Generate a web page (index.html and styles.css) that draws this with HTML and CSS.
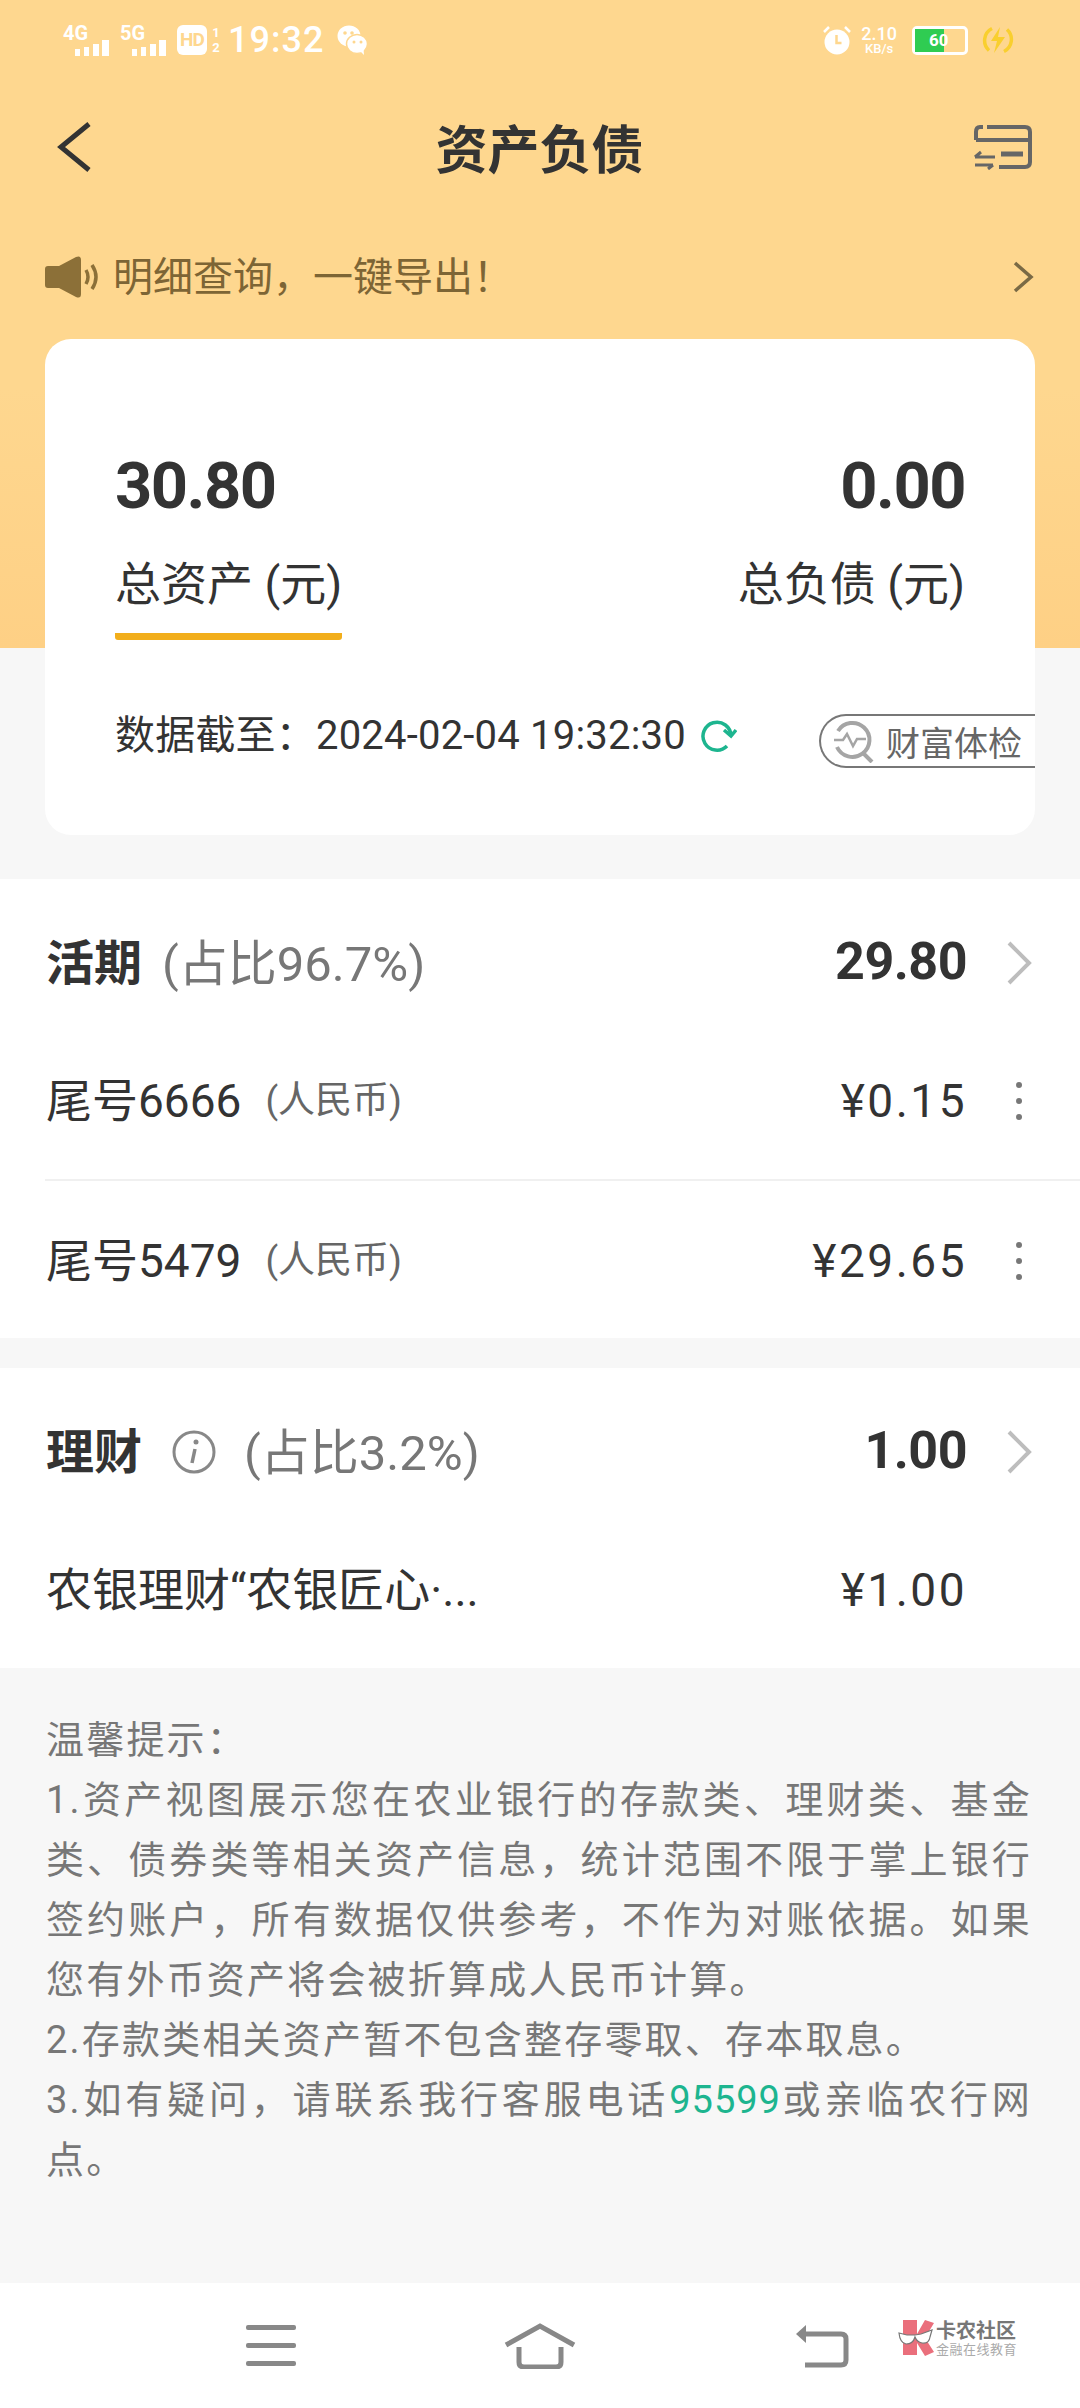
FILE: index.html
```html
<!DOCTYPE html>
<html lang="zh-CN">
<head>
    <meta charset="UTF-8">
    <title>资产负债</title>
    <link rel="stylesheet" href="styles.css">
</head>
<body>
<div class="page">
    <div class="top">
        <!-- status bar -->
        <div class="status">
            <div class="status-left">
                <div class="net"><span class="net-name">4G</span>
                    <svg class="bars" width="36" height="17" viewBox="0 0 36 17"><path d="M1 9h5v7H1zM10 7h5v9h-5zM19 4h6v12h-6zM28 0h7v16h-7z" fill="#fff"/></svg>
                </div>
                <div class="net"><span class="net-name">5G</span>
                    <svg class="bars" width="36" height="17" viewBox="0 0 36 17"><path d="M1 9h5v7H1zM10 7h5v9h-5zM19 4h6v12h-6zM28 0h7v16h-7z" fill="#fff"/></svg>
                </div>
                <span class="hd">HD</span>
                <span class="hd-num">1<br>2</span>
                <span class="clock">19:32</span>
                <svg class="wechat" width="31" height="30" viewBox="0 0 31 30">
                    <ellipse cx="12" cy="11" rx="11.500" ry="10.500" fill="#fff"/>
                    <ellipse cx="20" cy="19" rx="10.500" ry="9.500" fill="#fff" stroke="#fed78f" stroke-width="1.500"/>
                    <path d="M23 26l4 4-.5-6z" fill="#fff"/>
                    <circle cx="8" cy="8" r="1.800" fill="#fed78f"/><circle cx="15" cy="8" r="1.800" fill="#fed78f"/>
                    <circle cx="17" cy="17" r="1.500" fill="#fed78f"/><circle cx="24" cy="17" r="1.500" fill="#fed78f"/>
                </svg>
            </div>
            <div class="status-right">
                <svg width="30" height="30" viewBox="0 0 30 30">
                    <circle cx="15" cy="17" r="12.500" fill="#fff"/>
                    <path d="M2 7l5-5M28 7l-5-5" stroke="#fff" stroke-width="2.500"/>
                    <path d="M14.500 10v8h5" stroke="#fed78f" stroke-width="2.500" fill="none"/>
                </svg>
                <div class="speed"><span>2.10</span><span class="speed-unit">KB/s</span></div>
                <div class="battery">
                    <div class="battery-fill" style="width: 58%"></div>
                    <span class="battery-num">60</span>
                </div>
                <svg class="bolt" width="32" height="32" viewBox="0 0 32 32">
                    <path d="M10 4.500a13.500 13.500 0 0 0-3 22M22 27.500a13.500 13.500 0 0 0 3-22" stroke="#f9cf2e" stroke-width="3.500" fill="none"/>
                    <path d="M18 3L9 17h6l-3 12 11-16h-7z" fill="#f9cf2e"/>
                </svg>
            </div>
        </div>

        <!-- title bar -->
        <div class="titlebar">
            <svg width="36" height="50" viewBox="0 0 36 50"><path d="M33 2L5 25l28 23" fill="none" stroke="#333" stroke-width="5"/></svg>
            <h1 class="title">资产负债</h1>
            <svg width="60" height="46" viewBox="0 0 60 46" fill="none" stroke="#666" stroke-width="4">
                <path d="M14 3h38q5 0 5 5v30q0 5-5 5H26"/>
                <path d="M10 3H7q-4 0-4 5v8M3 16h54" />
                <path d="M28 30h22" stroke-width="5"/>
                <path d="M2 33h20M8 28l-6 5M2 41h18M20 41l-5 4" stroke-width="3"/>
            </svg>
        </div>

        <!-- notice -->
        <div class="notice">
            <svg width="56" height="42" viewBox="0 0 56 42" fill="#8c7038">
                <path d="M3 10h11L31 1q5-2 5 3v34q0 5-5 3L14 32H3q-3 0-3-3V13q0-3 3-3z"/>
                <path d="M41 14q4 7 0 14M47 9q8 12 0 24" fill="none" stroke="#8c7038" stroke-width="3.500"/>
            </svg>
            <span class="notice-text">明细查询，一键导出！</span>
            <svg class="notice-arrow" width="22" height="32" viewBox="0 0 22 32"><path d="M3 2l16 14L3 30" fill="none" stroke="#7a6a45" stroke-width="3.500"/></svg>
        </div>

        <!-- summary card -->
        <div class="card">
            <div class="totals">
                <div class="total">
                    <div class="total-num">30.80</div>
                    <div class="total-label total-active">总资产 (元)</div>
                </div>
                <div class="total total-right">
                    <div class="total-num">0.00</div>
                    <div class="total-label">总负债 (元)</div>
                </div>
            </div>
            <div class="date-row">
                <span class="date">数据截至：2024-02-04 19:32:30</span>
                <svg class="refresh" width="36" height="34" viewBox="0 0 36 34"><path d="M30 17A14 14 0 1 0 26 27M23 11l7 6 5-6" fill="none" stroke="#1db58f" stroke-width="3.500"/></svg>
                <div class="check">
                    <svg width="42" height="44" viewBox="0 0 42 44" fill="none" stroke="#a5a5a5" stroke-width="4">
                        <path d="M5 12A17 17 0 1 1 4 28"/>
                        <path d="M1 21h9l4-6 6 12 4-7h9" stroke-width="2.500"/>
                        <path d="M29 33l10 10"/>
                    </svg>
                    <span>财富体检</span>
                </div>
            </div>
        </div>
    </div>

    <!-- 活期 -->
    <section class="block block-first">
        <div class="row row-head">
            <div class="row-name"><b>活期</b><span class="share">(占比96.7%)</span></div>
            <b class="head-amount">29.80</b>
            <svg width="26" height="44" viewBox="0 0 26 44"><path d="M3 2l20 20L3 42" fill="none" stroke="#bdbdbd" stroke-width="4"/></svg>
        </div>
        <div class="row">
            <div class="row-name">尾号6666<span class="currency">(人民币)</span></div>
            <span class="amount">¥0.15</span>
            <div class="dots"><i></i><i></i><i></i></div>
        </div>
        <div class="row row-line">
            <div class="row-name">尾号5479<span class="currency">(人民币)</span></div>
            <span class="amount">¥29.65</span>
            <div class="dots"><i></i><i></i><i></i></div>
        </div>
    </section>

    <!-- 理财 -->
    <section class="block block-second">
        <div class="row row-head">
            <div class="row-name"><b>理财</b>
                <svg class="info" width="44" height="44" viewBox="0 0 44 44"><circle cx="22" cy="22" r="20" fill="none" stroke="#888" stroke-width="3"/><circle cx="24" cy="12" r="2.500" fill="#888"/><path d="M23 19l-3 14" stroke="#888" stroke-width="3.500"/></svg>
                <span class="share">(占比3.2%)</span></div>
            <b class="head-amount">1.00</b>
            <svg width="26" height="44" viewBox="0 0 26 44"><path d="M3 2l20 20L3 42" fill="none" stroke="#bdbdbd" stroke-width="4"/></svg>
        </div>
        <div class="row">
            <div class="row-name">农银理财“农银匠心·...</div>
            <span class="amount">¥1.00</span>
            <div></div>
        </div>
    </section>

    <div class="tips">
        <p>温馨提示：</p>
        <p class="full">1.资产视图展示您在农业银行的存款类、理财类、基金</p>
        <p class="full">类、债券类等相关资产信息，统计范围不限于掌上银行</p>
        <p class="full">签约账户，所有数据仅供参考，不作为对账依据。如果</p>
        <p>您有外币资产将会被折算成人民币计算。</p>
        <p>2.存款类相关资产暂不包含整存零取、存本取息。</p>
        <p class="full">3.如有疑问，请联系我行客服电话<span class="phone">95599</span>或亲临农行网</p>
        <p>点。</p>
    </div>

    <!-- bottom nav -->
    <div class="navbar">
        <div class="menu"><i></i><i></i><i></i></div>
        <svg class="nav-home" width="72" height="46" viewBox="0 0 72 46" fill="none" stroke="#888" stroke-width="5">
            <path d="M2 22L36 3l34 19"/>
            <path d="M15 24v15q0 5 5 5h32q5 0 5-5V24"/>
        </svg>
        <svg class="nav-back" width="54" height="44" viewBox="0 0 54 44" fill="none" stroke="#888" stroke-width="5">
            <path d="M8 10h38q5 0 5 5v21q0 5-5 5H10"/>
            <path d="M1 10l10-9v18z" fill="#888" stroke="none"/>
        </svg>
        <div class="mark">
            <svg width="38" height="38" viewBox="0 0 38 38">
                <path d="M5 1h14v35H5zM19 15L27 1l9 3-9 15 9 14-9 4-8-13z" fill="#ea6f7c"/>
                <path d="M1 14l8 2h8l6-1 11-4-2 7q-1 7-8 6-5-1-7-6-2 7-9 7-6-1-7-11z" fill="#fff" stroke="#777" stroke-width="1.200"/>
            </svg>
            <div class="mark-text">
                <span class="mark-name">卡农社区</span>
                <span class="mark-sub">金融在线教育</span>
            </div>
        </div>
    </div>
</div>
</body>
</html>
```

FILE: styles.css
```css
* {
    box-sizing: border-box;
}

body {
    margin: 0;
    font-family: Roboto, "Noto Sans CJK SC", sans-serif;
    color: #333;
    background-color: #f7f7f7;
}

.page {
    width: 1080px;
    height: 2408px;
    display: flex;
    flex-direction: column;
    overflow: hidden;
}

/* top area */
.top {
    height: 648px;
    background: linear-gradient(180deg, #fed78f 0%, #fed78f 60%, #fed085 100%);
}

.status {
    height: 80px;
    display: flex;
    justify-content: space-between;
    align-items: center;
    padding: 0 66px 0 63px;
    color: #fff;
}

.status-left, .status-right {
    display: flex;
    align-items: center;
}

.net {
    width: 57px;
    height: 36px;
    position: relative;
}

.net-name {
    position: absolute;
    left: 0;
    top: 1px;
    font-size: 20px;
    line-height: 20px;
    font-weight: 700;
}

.bars {
    position: absolute;
    right: 10px;
    bottom: 1px;
}

.hd {
    width: 30px;
    height: 30px;
    background-color: #fff;
    color: #fed78f;
    border-radius: 6px;
    font-size: 19px;
    font-weight: 700;
    letter-spacing: -1px;
    text-align: center;
    line-height: 30px;
}

.hd-num {
    width: 12px;
    margin-left: 3px;
    font-size: 13px;
    line-height: 15px;
    font-weight: 700;
    text-align: center;
}

.clock {
    margin-left: 6px;
    font-size: 36px;
    font-weight: 500;
    letter-spacing: 1px;
}

.wechat {
    margin-left: 13px;
}

.speed {
    display: flex;
    flex-direction: column;
    align-items: center;
    margin: 0 15px 0 9px;
    font-size: 18px;
    line-height: 16px;
    font-weight: 500;
}

.speed-unit {
    font-size: 13px;
    line-height: 13px;
}

.battery {
    width: 56px;
    height: 29px;
    border: 3px solid #fff;
    border-radius: 5px;
    position: relative;
}

.battery-fill {
    height: 100%;
    background-color: #2fcc52;
}

.battery-num {
    position: absolute;
    left: 14px;
    top: 0;
    font-size: 17px;
    line-height: 23px;
    font-weight: 700;
}

.bolt {
    margin-left: 14px;
}

.titlebar {
    height: 134px;
    display: flex;
    justify-content: space-between;
    align-items: center;
    padding: 0 47px 0 56px;
}

.title {
    margin: 0 0 2px 14px;
    font-size: 52px;
    font-weight: 700;
    font-family: "Noto Sans CJK SC", sans-serif;
}

.notice {
    height: 125px;
    display: flex;
    align-items: center;
    padding: 0 46px 0 45px;
}

.notice-text {
    margin: 0 0 5px 12px;
    font-size: 40px;
    color: #7d6535;
    flex: 1;
}

.card {
    height: 496px;
    margin: 0 45px;
    position: relative;
    background-color: #fff;
    border-radius: 26px;
    padding: 109px 0 0 70px;
    overflow: hidden;
}

.totals {
    display: flex;
    justify-content: space-between;
    padding: 0 70px 0 0;
}

.total-right {
    text-align: right;
}

.total-num {
    font-size: 65px;
    line-height: 76px;
    font-weight: 700;
    letter-spacing: -1.500px;
}

.total-label {
    margin-top: 30px;
    height: 86px;
    font-size: 46px;
    line-height: 60px;
}

.total-active {
    background: linear-gradient(#f2ae1b, #f2ae1b) left bottom / 100% 7px no-repeat;
    border-radius: 3px;
}

.date-row {
    margin-top: 64px;
    display: flex;
    align-items: center;
}

.date {
    font-size: 40px;
    line-height: 56px;
    letter-spacing: .2px;
}

.refresh {
    margin-left: 15px;
}

.check {
    margin: 10px 0 0 auto;
    width: 216px;
    height: 54px;
    display: flex;
    align-items: center;
    padding-left: 12px;
    border: 2px solid #777;
    border-right: 0;
    border-radius: 27px 0 0 27px;
    font-size: 34px;
    color: #666;
    white-space: nowrap;
}

.check span {
    margin-left: 11px;
}

/* account lists */
.block {
    background-color: #fff;
}

.block-first {
    margin-top: 231px;
}

.block-second {
    margin-top: 30px;
}

.row {
    display: grid;
    grid-template-columns: 1fr auto 65px;
    align-items: center;
    justify-items: end;
    height: 156px;
    padding-left: 46px;
    padding-right: 48px;
    position: relative;
    font-size: 46px;
}

.row-head {
    height: 144px;
    padding-top: 24px;
}

.row-line {
    height: 159px;
    padding-top: 5px;
}

.row-name {
    justify-self: start;
    display: flex;
    align-items: center;
    margin-bottom: 8px;
    white-space: nowrap;
}

.row-name b {
    font-size: 48px;
    font-family: "Noto Sans CJK SC", sans-serif;
}

.share {
    margin-left: 20px;
    font-size: 49px;
    color: #777;
}

.currency {
    margin-left: 24px;
    font-size: 37px;
    color: #666;
}

.info {
    margin: 8px 8px 0 30px;
}

.head-amount {
    margin-bottom: 4px;
    font-size: 52px;
    letter-spacing: -0.500px;
}

.amount {
    letter-spacing: 2.500px;
}

.row-line::before {
    content: "";
    position: absolute;
    left: 45px;
    right: 0;
    top: 0;
    height: 2px;
    background-color: #f0f0f0;
}

.dots {
    width: 6px;
    margin-right: 10px;
    display: flex;
    flex-direction: column;
    gap: 10px;
}

.dots i {
    display: block;
    width: 6px;
    height: 6px;
    border-radius: 50%;
    background-color: #777;
}

/* tips */
.tips {
    flex: 1;
    padding: 42px 48px 0 46px;
    font-size: 38px;
    line-height: 60px;
    letter-spacing: 2.200px;
    color: #777;
}

.tips p {
    margin: 0;
    white-space: nowrap;
}

.tips .full {
    white-space: normal;
    text-align: justify;
    text-align-last: justify;
}

.phone {
    color: #1db58f;
    letter-spacing: 1px;
}

/* bottom nav */
.navbar {
    height: 125px;
    flex-shrink: 0;
    background-color: #fff;
    display: flex;
    align-items: center;
    padding: 0 0 0 246px;
}

.menu {
    width: 50px;
    display: flex;
    flex-direction: column;
    gap: 13px;
}

.menu i {
    display: block;
    height: 5px;
    border-radius: 2px;
    background-color: #888;
}

.nav-home {
    margin-left: 208px;
}

.nav-back {
    margin-left: 219px;
}

.mark {
    margin: 0 0 16px 49px;
    display: flex;
    align-items: center;
}

.mark-text {
    display: flex;
    flex-direction: column;
    font-family: "Noto Sans CJK SC", sans-serif;
    white-space: nowrap;
}

.mark-name {
    font-size: 20px;
    line-height: 22px;
    font-weight: 700;
    color: #777;
}

.mark-sub {
    font-size: 13px;
    line-height: 16px;
    color: #aaa;
    letter-spacing: .5px;
}
```
